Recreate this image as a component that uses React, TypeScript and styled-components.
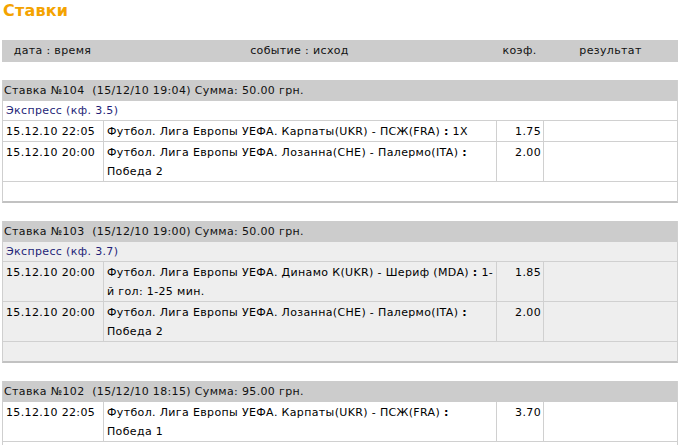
import React from 'react';
import styled, { createGlobalStyle } from 'styled-components';

const Global = createGlobalStyle`
  html, body { margin: 0; padding: 0; background: #fff; }
  body {
    font-family: "DejaVu Sans", Verdana, sans-serif;
    font-size: 11px;
    letter-spacing: 0.35px;
    color: #000;
  }
`;

const Page = styled.div`
  padding: 0 2px;
  width: 676px;
`;

const Title = styled.h1`
  margin: 0 0 18px;
  padding-left: 1px;
  font-size: 16px;
  line-height: 22px;
  font-weight: bold;
  letter-spacing: 0.2px;
  color: #f4a300;
`;

const HeaderBar = styled.div`
  display: grid;
  grid-template-columns: 101px 393px 47px 1fr;
  height: 22px;
  line-height: 22px;
  background: #cccccc;
  margin-bottom: 18px;
  color: #111;
`;

const HeaderCell = styled.div`
  text-align: center;
  white-space: nowrap;
`;

const Block = styled.div<{ $alt?: boolean }>`
  border-left: 1px solid #cfcfcf;
  border-right: 1px solid #cfcfcf;
  border-bottom: 2px solid #c2c2c2;
  background: ${(p) => (p.$alt ? '#eeeeee' : '#ffffff')};
  margin-bottom: 18px;
`;

const BlockHead = styled.div`
  background: #cccccc;
  height: 21px;
  line-height: 21px;
  padding-left: 1px;
  white-space: pre;
  color: #111;
`;

const ExpressRow = styled.div`
  line-height: 19px;
  padding-left: 3px;
  border-bottom: 1px solid #d0d0d0;
  color: #1f1f78;
`;

const EmptyRow = styled.div`
  height: 19px;
  border-bottom: 1px solid #d0d0d0;
  &:last-child { border-bottom: none; }
`;

const BetRow = styled.div`
  display: grid;
  grid-template-columns: 100px 393px 47px 1fr;
  border-bottom: 1px solid #d0d0d0;
`;

const Cell = styled.div<{ $divider?: boolean; $right?: boolean }>`
  padding: 1px ${(p) => (p.$right ? '2px' : '0')} 0 3px;
  line-height: 19px;
  border-left: ${(p) => (p.$divider ? '1px solid #d0d0d0' : 'none')};
  text-align: ${(p) => (p.$right ? 'right' : 'left')};
  overflow: hidden;
`;

const Line = styled.div`
  white-space: nowrap;
`;

const Sep = styled.b`
  font-weight: bold;
`;

type Bet = { date: string; lines: React.ReactNode[]; coef: string };
type Stake = { head: string; express?: string; bets: Bet[]; alt?: boolean };

const ev = (a: string, b: string) => (
  <>
    {a} <Sep>:</Sep>
    {b ? ` ${b}` : ''}
  </>
);

const stakes: Stake[] = [
  {
    head: 'Ставка №104  (15/12/10 19:04) Сумма: 50.00 грн.',
    express: 'Экспресс (кф. 3.5)',
    bets: [
      {
        date: '15.12.10 22:05',
        lines: [ev('Футбол. Лига Европы УЕФА. Карпаты(UKR) - ПСЖ(FRA)', '1X')],
        coef: '1.75',
      },
      {
        date: '15.12.10 20:00',
        lines: [ev('Футбол. Лига Европы УЕФА. Лозанна(CHE) - Палермо(ITA)', ''), 'Победа 2'],
        coef: '2.00',
      },
    ],
  },
  {
    head: 'Ставка №103  (15/12/10 19:00) Сумма: 50.00 грн.',
    express: 'Экспресс (кф. 3.7)',
    alt: true,
    bets: [
      {
        date: '15.12.10 20:00',
        lines: [ev('Футбол. Лига Европы УЕФА. Динамо К(UKR) - Шериф (MDA)', '1-'), 'й гол: 1-25 мин.'],
        coef: '1.85',
      },
      {
        date: '15.12.10 20:00',
        lines: [ev('Футбол. Лига Европы УЕФА. Лозанна(CHE) - Палермо(ITA)', ''), 'Победа 2'],
        coef: '2.00',
      },
    ],
  },
  {
    head: 'Ставка №102  (15/12/10 18:15) Сумма: 95.00 грн.',
    bets: [
      {
        date: '15.12.10 22:05',
        lines: [ev('Футбол. Лига Европы УЕФА. Карпаты(UKR) - ПСЖ(FRA)', ''), 'Победа 1'],
        coef: '3.70',
      },
    ],
  },
];

export default function App() {
  return (
    <Page>
      <Global />
      <Title>Ставки</Title>
      <HeaderBar>
        <HeaderCell>дата : время</HeaderCell>
        <HeaderCell>событие : исход</HeaderCell>
        <HeaderCell>коэф.</HeaderCell>
        <HeaderCell>результат</HeaderCell>
      </HeaderBar>
      {stakes.map((s, i) => (
        <Block key={i} $alt={s.alt}>
          <BlockHead>{s.head}</BlockHead>
          {s.express && <ExpressRow>{s.express}</ExpressRow>}
          {s.bets.map((b, j) => (
            <BetRow key={j}>
              <Cell>{b.date}</Cell>
              <Cell $divider>
                {b.lines.map((l, k) => (
                  <Line key={k}>{l}</Line>
                ))}
              </Cell>
              <Cell $divider $right>{b.coef}</Cell>
              <Cell $divider />
            </BetRow>
          ))}
          <EmptyRow />
        </Block>
      ))}
    </Page>
  );
}
